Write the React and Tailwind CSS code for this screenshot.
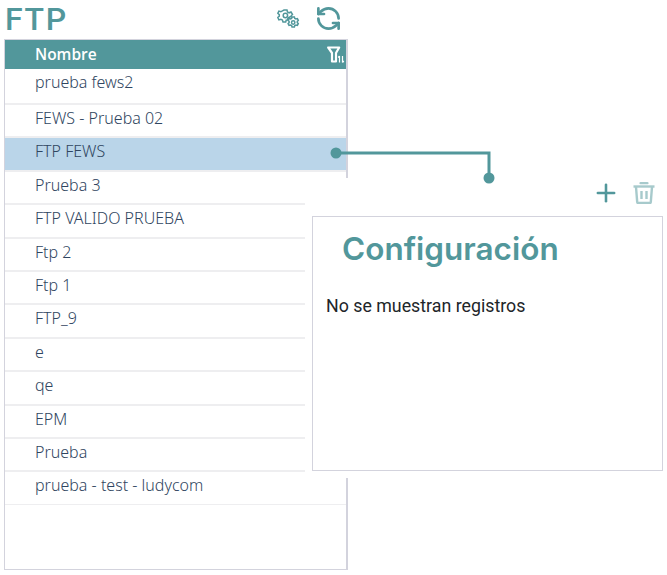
import { Plus, RefreshCcw } from "lucide-react";

const rows = [
  ["prueba fews2", 36],
  ["FEWS - Prueba 02", 33],
  ["FTP FEWS", 34, true],
  ["Prueba 3", 33],
  ["FTP VALIDO PRUEBA", 34],
  ["Ftp 2", 33],
  ["Ftp 1", 33],
  ["FTP_9", 34],
  ["e", 33],
  ["qe", 34],
  ["EPM", 33],
  ["Prueba", 33],
  ["prueba - test - ludycom", 33],
];

const GearsIcon = () => (
  <svg width="23" height="22" viewBox="0 0 23 22" fill="none" stroke="#52979b" strokeWidth="1.5">
    <path d="M7 2h3l.5 2 1.6.8 1.9-.8 1.5 2.4-1.3 1.4v.7a5 5 0 0 0-4 3.6l-1 .1-.5 1.8H6l-.6-2-1.5-.8-2 .7L.8 9.5l1.5-1.4V6.6L.8 5.3l1.1-2.2 2 .6 1.5-.8z" />
    <circle cx="8.4" cy="7.5" r="2.2" />
    <path d="M15 9h2.4l.4 1.4 1.2.6 1.4-.4.9 1.8-1 1v1.2l1 1-.9 1.8-1.4-.4-1.2.6-.4 1.4H15l-.4-1.4-1.2-.6-1.4.4-.9-1.8 1-1v-1.2l-1-1 .9-1.8 1.4.4 1.2-.6z" />
    <circle cx="16.2" cy="14.5" r="1.7" />
  </svg>
);

const FilterIcon = () => (
  <svg className="shrink-0" width="18" height="17" viewBox="0 0 18 17" fill="none" stroke="#fff">
    <path d="M1.2 1.5h11L9 7v8.5H5V7z" strokeWidth="2.2" strokeLinejoin="round" />
    <path d="M12.5 10v6.5M11.2 11.5 12.5 10M15.5 10v6.5M16.8 15 15.5 16.5" strokeWidth="1.2" />
  </svg>
);

const TrashIcon = () => (
  <svg className="opacity-50" width="22" height="22" viewBox="0 0 22 22" fill="none" stroke="#52979b">
    <path d="M0.5 4.5h21" strokeWidth="2.4" />
    <path d="M7.5 1.2h7" strokeWidth="2.2" strokeLinecap="round" />
    <path d="M3 5l1.2 15a1 1 0 0 0 1 1h11.6a1 1 0 0 0 1-1L19 5" strokeWidth="2.4" />
    <path d="M8.5 9v8M13.5 9v8" strokeWidth="2.4" />
  </svg>
);

const App = () => {
  return (
    <div className="relative w-[667px] h-[575px] overflow-hidden bg-white font-['Roboto',sans-serif]">
      <div className="w-[348px] pl-1">
        <header className="flex h-[39px] items-center justify-between">
          <h1 className="pl-px text-[32px] leading-[39px] font-medium tracking-[1.6px] text-[#52979b]">FTP</h1>
          <div className="mb-[2px] flex items-center gap-[15px] pr-[6px]">
            <GearsIcon />
            <RefreshCcw size={27} strokeWidth={2.4} color="#52979b" />
          </div>
        </header>
        <section className="h-[531px] border border-r-2 border-[#d3d3dd]">
          <div className="flex h-[29px] items-center justify-between bg-[#52979b] pl-[30px] pr-px font-['Open_Sans',sans-serif] text-[15.5px] font-semibold text-white">
            <span>Nombre</span>
            <FilterIcon />
          </div>
          {rows.map(([name, height, selected]) => (
            <div
              key={name}
              style={{ height }}
              className={`border-b-2 border-[#eeeef0] pl-[30px] font-['Noto_Sans',sans-serif] text-[16px] leading-[27px] font-light text-[#2f4560] last:border-b ${
                selected ? "bg-[#bad5e9]" : ""
              }`}
            >
              {name}
            </div>
          ))}
        </section>
      </div>

      <div className="absolute left-[305px] top-[178px] h-[300px] w-[362px] bg-white">
        <div className="absolute right-[4px] top-[38px] h-[255px] w-[351px] border border-[#d3d3dd] bg-white">
          <h2 className="pl-[29px] pt-[13px] font-['Inter',sans-serif] text-[31.5px] leading-[38px] font-semibold text-[#52979b]">
            Configuración
          </h2>
          <p className="pl-[13px] pt-[26px] text-[17.8px] leading-[24px] text-[#212529]">No se muestran registros</p>
        </div>
        <div className="absolute right-[12px] top-[1px] flex items-center gap-[13px]">
          <Plus size={28} strokeWidth={2.2} color="#52979b" />
          <TrashIcon />
        </div>
      </div>

      <svg className="absolute left-[328px] top-[144px]" width="170" height="42" viewBox="0 0 170 42" fill="none">
        <path d="M8 9H161V34" stroke="#52979b" strokeWidth="3" />
        <circle cx="8" cy="9" r="5.5" fill="#52979b" />
        <circle cx="161" cy="34" r="5.5" fill="#52979b" />
      </svg>
    </div>
  );
};

export default App;
